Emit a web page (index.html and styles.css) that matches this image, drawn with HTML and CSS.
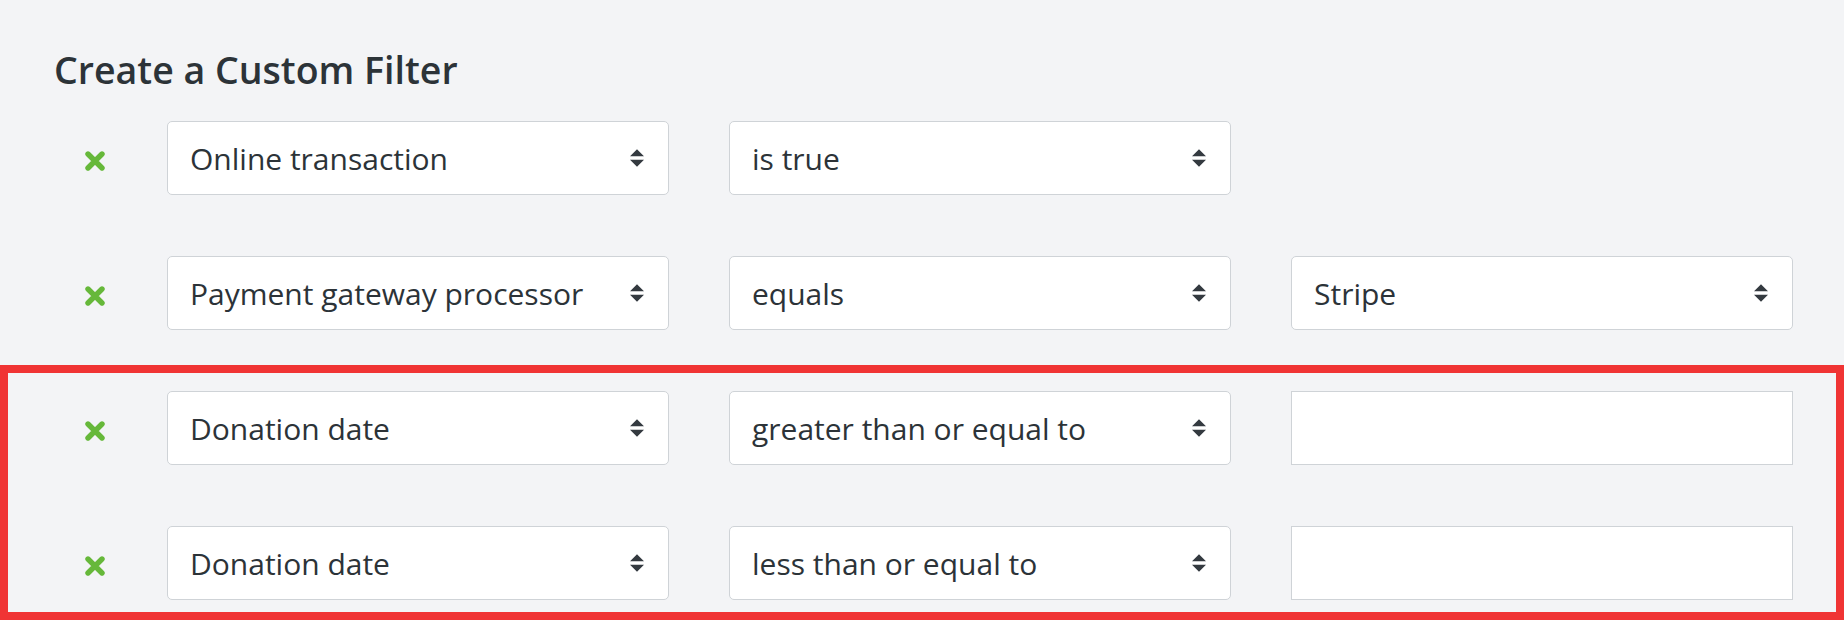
FILE: index.html
```html
<!DOCTYPE html>
<html lang="en">
<head>
<meta charset="utf-8">
<title>Create a Custom Filter</title>
<link rel="stylesheet" href="styles.css">
</head>
<body>
<div class="page">
  <h2 class="title">Create a Custom Filter</h2>
  <div class="rows">
    <div class="row">
      <span class="remove"><svg viewBox="0 0 20 20" width="20" height="20"><path d="M3 3L17 17M17 3L3 17" /></svg></span>
      <div class="select"><span>Online transaction</span><svg class="caret" viewBox="0 0 4 5" width="14" height="18"><path d="M2 0L0 2h4zm0 5L0 3h4z"/></svg></div>
      <div class="select"><span>is true</span><svg class="caret" viewBox="0 0 4 5" width="14" height="18"><path d="M2 0L0 2h4zm0 5L0 3h4z"/></svg></div>
    </div>
    <div class="row">
      <span class="remove"><svg viewBox="0 0 20 20" width="20" height="20"><path d="M3 3L17 17M17 3L3 17" /></svg></span>
      <div class="select"><span>Payment gateway processor</span><svg class="caret" viewBox="0 0 4 5" width="14" height="18"><path d="M2 0L0 2h4zm0 5L0 3h4z"/></svg></div>
      <div class="select"><span>equals</span><svg class="caret" viewBox="0 0 4 5" width="14" height="18"><path d="M2 0L0 2h4zm0 5L0 3h4z"/></svg></div>
      <div class="select"><span>Stripe</span><svg class="caret" viewBox="0 0 4 5" width="14" height="18"><path d="M2 0L0 2h4zm0 5L0 3h4z"/></svg></div>
    </div>
    <div class="row">
      <span class="remove"><svg viewBox="0 0 20 20" width="20" height="20"><path d="M3 3L17 17M17 3L3 17" /></svg></span>
      <div class="select"><span>Donation date</span><svg class="caret" viewBox="0 0 4 5" width="14" height="18"><path d="M2 0L0 2h4zm0 5L0 3h4z"/></svg></div>
      <div class="select"><span>greater than or equal to</span><svg class="caret" viewBox="0 0 4 5" width="14" height="18"><path d="M2 0L0 2h4zm0 5L0 3h4z"/></svg></div>
      <input class="field" type="text">
    </div>
    <div class="row">
      <span class="remove"><svg viewBox="0 0 20 20" width="20" height="20"><path d="M3 3L17 17M17 3L3 17" /></svg></span>
      <div class="select"><span>Donation date</span><svg class="caret" viewBox="0 0 4 5" width="14" height="18"><path d="M2 0L0 2h4zm0 5L0 3h4z"/></svg></div>
      <div class="select"><span>less than or equal to</span><svg class="caret" viewBox="0 0 4 5" width="14" height="18"><path d="M2 0L0 2h4zm0 5L0 3h4z"/></svg></div>
      <input class="field" type="text">
    </div>
  </div>
  <div class="highlight"></div>
</div>
</body>
</html>
```

FILE: styles.css
```css
html, body {
  margin: 0;
  padding: 0;
  background: #f3f4f6;
  height: 100%;
  overflow: hidden;
}

.page {
  position: relative;
  height: 620px;
  font-family: "Open Sans", "Noto Sans", sans-serif;
  color: #2c3338;
}

.title {
  margin: 0;
  padding: 48px 0 0 54px;
  font-size: 37.5px;
  line-height: 44px;
  font-weight: 600;
  color: #2c3338;
}

.rows {
  display: flex;
  flex-direction: column;
  gap: 61px;
  margin-top: 29px;
}

.row {
  display: flex;
  align-items: center;
  padding-left: 85px;
  gap: 60px;
}

.remove {
  display: flex;
  width: 20px;
  height: 20px;
  margin-right: 2px;
  margin-top: 6px;
}

.remove svg path {
  fill: none;
  stroke: #66b83a;
  stroke-width: 5.4;
  stroke-linecap: round;
}

.select,
.field {
  box-sizing: border-box;
  width: 502px;
  height: 74px;
  background: #fff;
  border: 1px solid #cfd3d7;
}

.select {
  display: flex;
  align-items: center;
  justify-content: space-between;
  padding: 0 24px 0 22px;
  border-radius: 5px;
  font-size: 30px;
  color: #2c3338;
}

.caret path {
  fill: #343a40;
}

.field {
  margin: 0;
  padding: 0;
  border-radius: 0;
  outline: none;
  font: inherit;
}

.highlight {
  position: absolute;
  left: 0;
  right: 0;
  top: 365px;
  bottom: 0;
  border: 8px solid #f03434;
  pointer-events: none;
}
```
